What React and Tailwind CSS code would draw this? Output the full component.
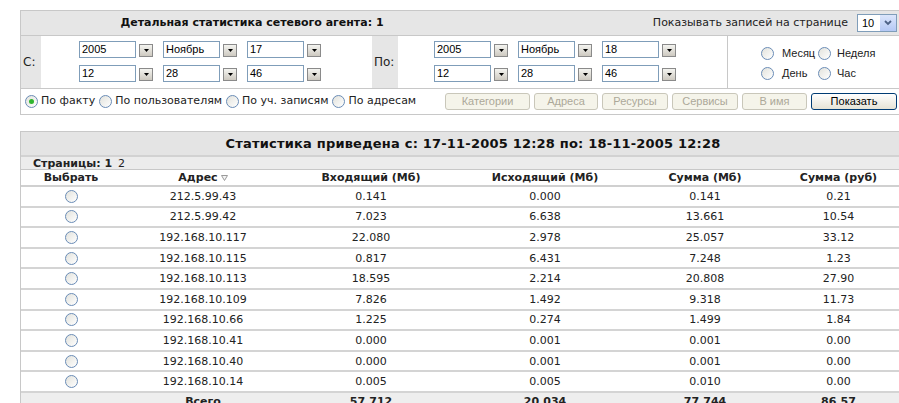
import React from "react";

const sans = "font-['DejaVu_Sans',Verdana,sans-serif]";
const win = "font-['Liberation_Sans',Tahoma,sans-serif]";

function Radio({ checked }) {
  return (
    <span className="inline-flex h-[13px] w-[13px] shrink-0 items-center justify-center rounded-full border border-[#6a8cb6] bg-linear-to-br from-[#e2e2dc] to-white">
      {checked && <span className="h-[5px] w-[5px] rounded-full bg-[#2fb52f]" />}
    </span>
  );
}

function DropBtn() {
  return (
    <span className="ml-[3px] mb-[1px] inline-flex h-[13px] w-[14px] items-center justify-center border border-[#8a8a8a] bg-linear-to-b from-[#f4f4f0] to-[#cdc9c0]">
      <svg width="5" height="3" viewBox="0 0 5 3">
        <path d="M0 0h5L2.5 3z" fill="#000" />
      </svg>
    </span>
  );
}

function Field({ v }) {
  return (
    <span className={`flex h-[17px] w-[57px] items-center border border-[#7f9db9] bg-white pl-[2px] text-[11px] text-black ${win}`}>
      {v}
    </span>
  );
}

function PickerRow({ items }) {
  return (
    <div className="flex items-end">
      {items.map((v, i) => (
        <div key={i} className={`flex items-end ${i > 0 ? "ml-[10px]" : ""}`}>
          <Field v={v} />
          <DropBtn />
        </div>
      ))}
    </div>
  );
}

function Btn({ label, w, active }) {
  return (
    <span
      className={`flex h-[17px] items-center justify-center rounded-[3px] text-[11px] ${win} ${
        active
          ? "border border-[#003c74] bg-linear-to-b from-white to-[#e6e3d6] text-black"
          : "border border-[#c9c7ba] bg-[#f5f4ea] text-[#aca899]"
      }`}
      style={{ width: w }}
    >
      {label}
    </span>
  );
}

const rows = [
  ["212.5.99.43", "0.141", "0.000", "0.141", "0.21"],
  ["212.5.99.42", "7.023", "6.638", "13.661", "10.54"],
  ["192.168.10.117", "22.080", "2.978", "25.057", "33.12"],
  ["192.168.10.115", "0.817", "6.431", "7.248", "1.23"],
  ["192.168.10.113", "18.595", "2.214", "20.808", "27.90"],
  ["192.168.10.109", "7.826", "1.492", "9.318", "11.73"],
  ["192.168.10.66", "1.225", "0.274", "1.499", "1.84"],
  ["192.168.10.41", "0.000", "0.001", "0.001", "0.00"],
  ["192.168.10.40", "0.000", "0.001", "0.001", "0.00"],
  ["192.168.10.14", "0.005", "0.005", "0.010", "0.00"],
];

const cols = "grid grid-cols-[100px_164px_172px_176px_144px_123px]";

export default function App() {
  return (
    <div className={`h-[403px] w-[899px] overflow-hidden bg-white text-[11px] text-[#222] ${sans}`}>
      {/* filter panel */}
      <div className="ml-[20px] mt-[10px] w-[879px] border-b border-l border-t border-[#c8c8c8]">
        <div className="flex h-[25px] items-center border-b border-[#c8c8c8] bg-[#e6e6e6]">
          <div className="w-[462px] text-center font-bold text-[#111]">
            Детальная статистика сетевого агента: 1
          </div>
          <div className="flex flex-1 items-center justify-end pr-[2px]">
            <span className="text-[#222]">Показывать записей на странице</span>
            <span className={`ml-[9px] flex h-[18px] w-[40px] items-center justify-between border border-[#7f9db9] bg-white pl-[4px] text-[11px] text-black ${win}`}>
              10
              <span className="flex h-[16px] w-[16px] items-center justify-center bg-linear-to-b from-[#dce6fb] to-[#b4c8f4]">
                <svg width="8" height="6" viewBox="0 0 8 6">
                  <path d="M1 1l3 3 3-3" fill="none" stroke="#4d6185" strokeWidth="1.8" />
                </svg>
              </span>
            </span>
          </div>
        </div>

        <div className="flex h-[53px] border-b border-[#c8c8c8]">
          <div className="flex w-[20px] items-center bg-[#e6e6e6] pl-[2px] text-[12px]">С:</div>
          <div className="flex w-[331px] flex-col gap-[7px] pl-[38px] pt-[5px]">
            <PickerRow items={["2005", "Ноябрь", "17"]} />
            <PickerRow items={["12", "28", "46"]} />
          </div>
          <div className="flex w-[26px] items-center bg-[#e6e6e6] pl-[2px] text-[12px]">По:</div>
          <div className="flex w-[329px] flex-col gap-[7px] pl-[36px] pt-[5px]">
            <PickerRow items={["2005", "Ноябрь", "18"]} />
            <PickerRow items={["12", "28", "46"]} />
          </div>
          <div className={`flex flex-1 flex-col gap-[7px] border-l border-[#c8c8c8] pl-[33px] pt-[11px] text-[11px] leading-none ${win}`}>
            <div className="grid h-[13px] grid-cols-[57px_60px] items-center">
              <span className="flex items-center gap-[8px]"><Radio />Месяц</span>
              <span className="flex items-center gap-[6px]"><Radio />Неделя</span>
            </div>
            <div className="grid h-[13px] grid-cols-[57px_60px] items-center">
              <span className="flex items-center gap-[8px]"><Radio />День</span>
              <span className="flex items-center gap-[6px]"><Radio />Час</span>
            </div>
          </div>
        </div>

        <div className="flex h-[25px] items-center pl-[4px] pr-[2px]">
          <div className="flex items-center">
            <span className="flex items-center gap-[3px]"><Radio checked />По факту</span>
            <span className="ml-[4px] flex items-center gap-[3px]"><Radio />По пользователям</span>
            <span className="ml-[4px] flex items-center gap-[3px]"><Radio />По уч. записям</span>
            <span className="ml-[4px] flex items-center gap-[3px]"><Radio />По адресам</span>
          </div>
          <div className="ml-auto flex items-center gap-[4px]">
            <Btn label="Категории" w={85} />
            <Btn label="Адреса" w={64} />
            <Btn label="Ресурсы" w={66} />
            <Btn label="Сервисы" w={66} />
            <Btn label="В имя" w={65} />
            <Btn label="Показать" w={86} active />
          </div>
        </div>
      </div>

      {/* statistics table */}
      <div className="ml-[20px] mt-[16px] w-[879px] border-l border-t border-[#c8c8c8]">
        <div className="flex h-[25px] items-center justify-center border-b-2 border-[#d2d2d2] bg-[#e4e4e4] pl-[26px] text-[13px] font-bold tracking-[0.2px] text-[#111]">
          Статистика приведена с: 17-11-2005 12:28 по: 18-11-2005 12:28
        </div>
        <div className="flex h-[13px] items-center border-b border-[#c8c8c8] bg-[#ececec] pl-[12px] leading-none">
          <span className="font-bold">Страницы: 1</span>
          <span className="ml-[6px]">2</span>
        </div>
        <div className={`${cols} h-[17px] items-center border-b-2 border-[#d0d0d0] text-center font-bold leading-none`}>
          <span>Выбрать</span>
          <span className="flex items-center justify-center gap-[3px]">
            Адрес
            <svg width="7" height="6" viewBox="0 0 7 6">
              <path d="M0.5 0.5h6L3.5 5.5z" fill="#f4f4f4" stroke="#9a9a9a" strokeWidth="1" />
            </svg>
          </span>
          <span>Входящий (Мб)</span>
          <span>Исходящий (Мб)</span>
          <span>Сумма (Мб)</span>
          <span>Сумма (руб)</span>
        </div>
        {rows.map((r, i) => (
          <div key={i} className={`${cols} h-[20.6px] items-center border-b-2 border-[#d4d4d4] text-center leading-none`}>
            <span className="flex justify-center"><Radio /></span>
            {r.map((c, j) => (
              <span key={j}>{c}</span>
            ))}
          </div>
        ))}
        <div className={`${cols} h-[18px] items-center bg-[#eeeeee] text-center font-bold leading-none`}>
          <span />
          <span>Всего</span>
          <span>57.712</span>
          <span>20.034</span>
          <span>77.744</span>
          <span>86.57</span>
        </div>
      </div>
    </div>
  );
}
